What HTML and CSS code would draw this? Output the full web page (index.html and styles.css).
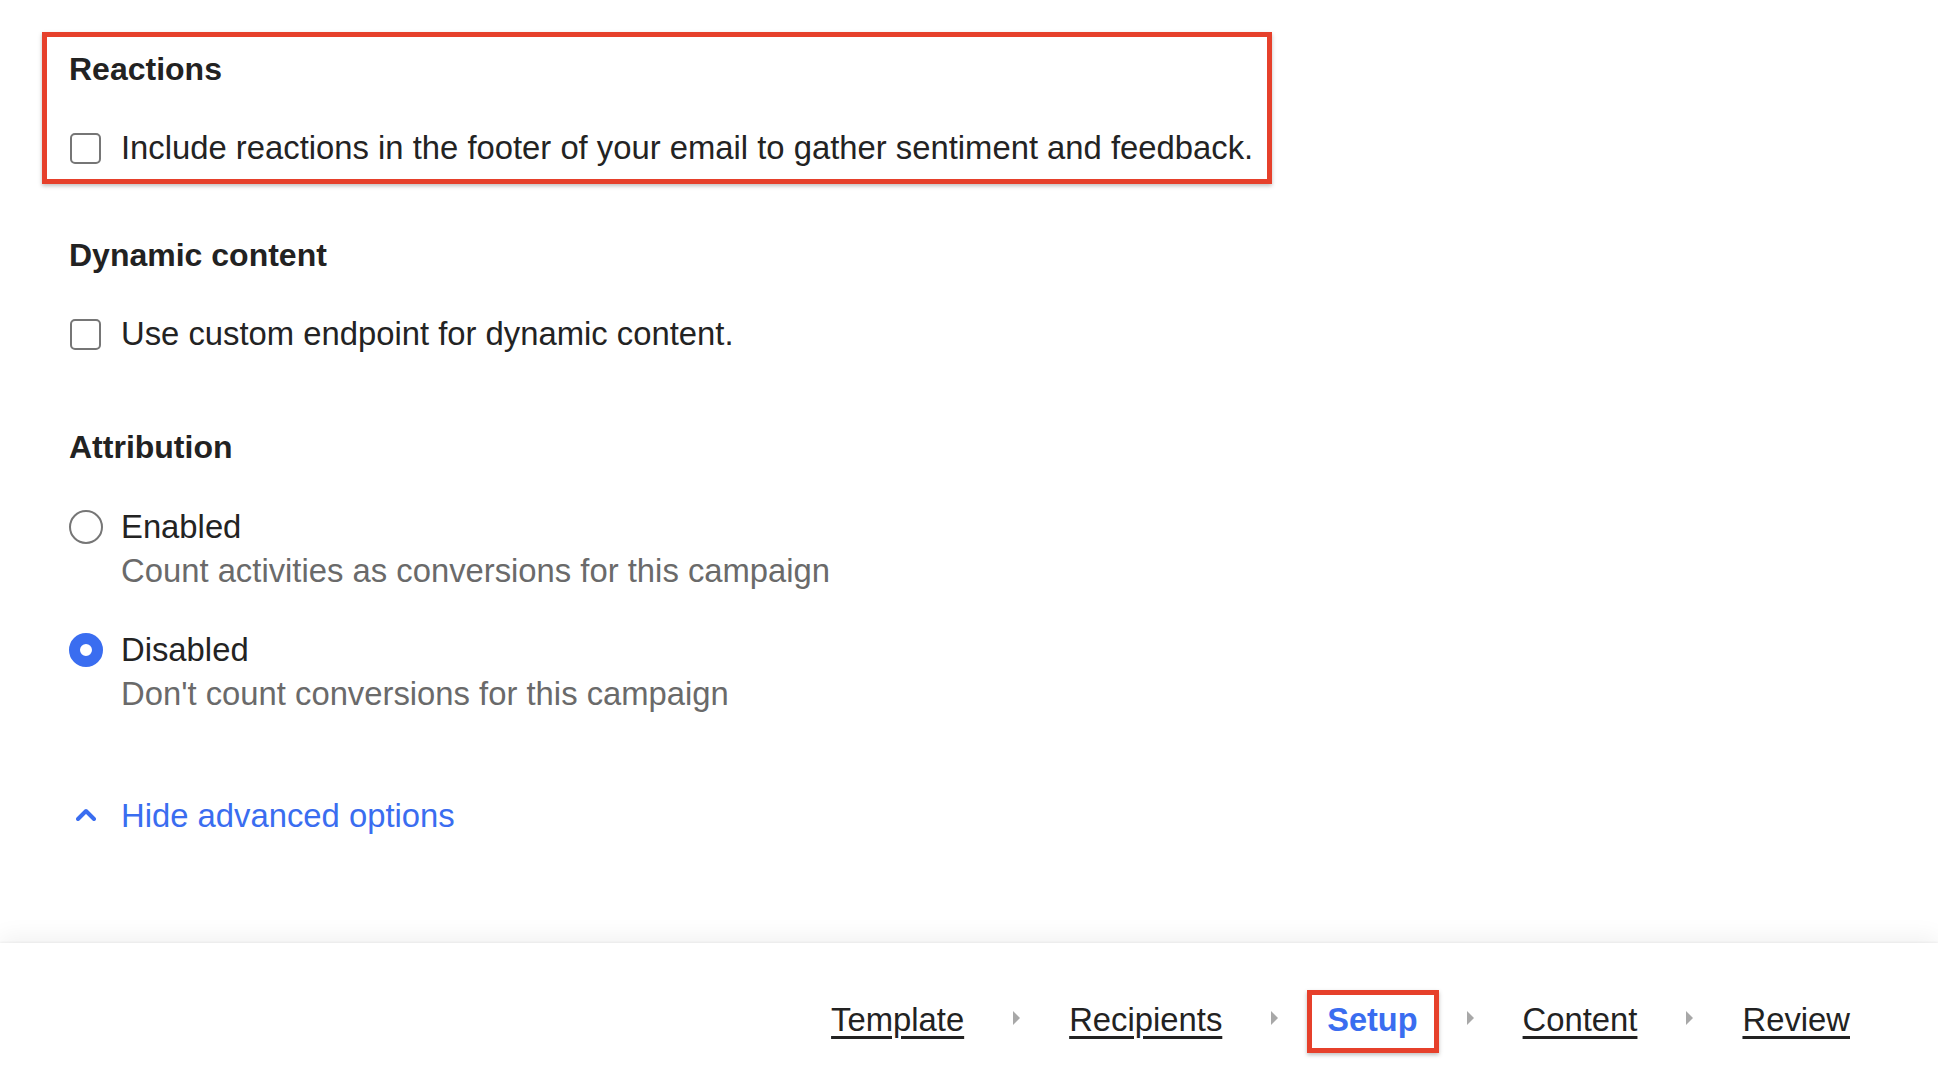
FILE: index.html
```html
<!DOCTYPE html>
<html lang="en">
<head>
<meta charset="utf-8">
<title>Campaign setup</title>
<link rel="stylesheet" href="styles.css">
</head>
<body>
<div class="page">
  <main class="content">
    <section class="group highlight">
      <h2 class="group-title">Reactions</h2>
      <label class="option">
        <span class="checkbox"></span>
        <span class="option-label">Include reactions in the footer of your email to gather sentiment and feedback.</span>
      </label>
    </section>

    <section class="group group-dynamic">
      <h2 class="group-title">Dynamic content</h2>
      <label class="option">
        <span class="checkbox"></span>
        <span class="option-label">Use custom endpoint for dynamic content.</span>
      </label>
    </section>

    <section class="group group-attribution">
      <h2 class="group-title">Attribution</h2>
      <div class="radio-option">
        <span class="radio"></span>
        <div class="radio-text">
          <div class="option-label">Enabled</div>
          <div class="option-desc">Count activities as conversions for this campaign</div>
        </div>
      </div>
      <div class="radio-option radio-option-second">
        <span class="radio radio-checked"></span>
        <div class="radio-text">
          <div class="option-label">Disabled</div>
          <div class="option-desc">Don't count conversions for this campaign</div>
        </div>
      </div>
    </section>

    <a class="toggle-link" href="#">
      <svg class="chevron" width="20" height="13" viewBox="0 0 20 13" aria-hidden="true">
        <path d="M2 11 L10 3 L18 11" fill="none" stroke="#3a6df0" stroke-width="4" stroke-linecap="round" stroke-linejoin="round"/>
      </svg>
      <span>Hide advanced options</span>
    </a>
  </main>

  <footer class="footer">
    <nav class="steps">
      <a class="step" href="#">Template</a>
      <span class="step-arrow"></span>
      <a class="step" href="#">Recipients</a>
      <span class="step-arrow"></span>
      <a class="step step-current" href="#">Setup</a>
      <span class="step-arrow"></span>
      <a class="step" href="#">Content</a>
      <span class="step-arrow"></span>
      <a class="step" href="#">Review</a>
    </nav>
  </footer>
</div>
</body>
</html>
```

FILE: styles.css
```css
* { box-sizing: border-box; }

html, body {
  margin: 0;
  padding: 0;
  background: #ffffff;
}

body {
  font-family: "Liberation Sans", Arial, Helvetica, sans-serif;
  color: #232323;
  font-size: 32.8px;
}

.page {
  min-height: 100vh;
  display: flex;
  flex-direction: column;
}

.content {
  flex: 1;
  padding: 32px 0 0 69px;
  display: flex;
  flex-direction: column;
  align-items: flex-start;
}

.group-title {
  margin: 0;
  font-size: 32px;
  font-weight: 700;
  line-height: 40px;
  color: #222222;
}

.highlight {
  margin-left: -27px;
  padding: 12px 14px 9px 22px;
  border: 5px solid #e6402b;
  box-shadow: 0 2px 4px rgba(0, 0, 0, 0.25);
}

.option {
  margin-top: 37px;
  display: flex;
  align-items: center;
  height: 44px;
}

.checkbox {
  width: 31px;
  height: 31px;
  margin-left: 1px;
  border: 2px solid #767676;
  border-radius: 5px;
  background: #fff;
  flex: none;
}

.option-label {
  margin-left: 20px;
  line-height: 44px;
  white-space: nowrap;
}

.group-dynamic {
  margin-top: 51px;
}

.group-attribution {
  margin-top: 71px;
}

.radio-option {
  margin-top: 38px;
  display: flex;
  align-items: flex-start;
}

.radio-option-second {
  margin-top: 35px;
}

.radio {
  width: 34px;
  height: 34px;
  margin-top: 5px;
  border: 2px solid #767676;
  border-radius: 50%;
  flex: none;
  background: #fff;
}

.radio-checked {
  border: 11px solid #3a6df0;
}

.radio-text {
  display: flex;
  flex-direction: column;
}

.radio-text .option-label {
  margin-left: 18px;
}

.option-desc {
  margin-left: 18px;
  line-height: 44px;
  color: #6a6a6a;
  white-space: nowrap;
}

.toggle-link {
  margin-top: 78px;
  display: flex;
  align-items: center;
  height: 44px;
  color: #3a6df0;
  text-decoration: none;
  line-height: 44px;
}

.chevron {
  margin-left: 7px;
  margin-top: -4px;
  flex: none;
}

.toggle-link span {
  margin-left: 25px;
}

.footer {
  height: 147px;
  background: #ffffff;
  box-shadow: 0 -6px 22px rgba(0, 0, 0, 0.06), 0 -1px 2px rgba(0, 0, 0, 0.05);
  display: flex;
  align-items: center;
  justify-content: flex-end;
  padding: 7px 88px 0 0;
  position: relative;
}

.steps {
  display: flex;
  align-items: center;
  gap: 49px;
}

.step {
  color: #222222;
  font-size: 32.8px;
  line-height: 40px;
  text-decoration: underline;
  text-decoration-thickness: 3px;
  text-underline-offset: 5px;
}

.step-current {
  position: relative;
  color: #3a6df0;
  font-size: 32.5px;
  font-weight: 700;
  text-decoration: none;
}

.step-current::after {
  content: "";
  position: absolute;
  left: -20px;
  right: -21px;
  top: -10px;
  bottom: -13px;
  border: 5px solid #e6402b;
  box-shadow: 0 2px 4px rgba(0, 0, 0, 0.25);
}

.step-arrow {
  width: 0;
  height: 0;
  border-left: 7px solid #a8a8a8;
  border-top: 7px solid transparent;
  border-bottom: 7px solid transparent;
  margin-top: -4px;
}
```
